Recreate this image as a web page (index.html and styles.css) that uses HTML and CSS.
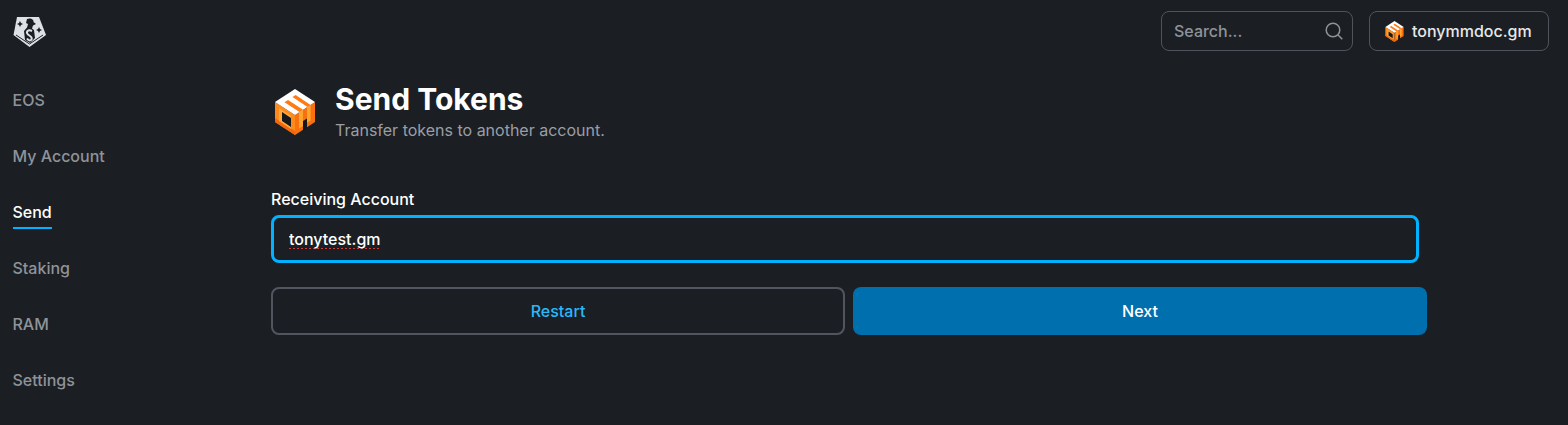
FILE: index.html
```html
<!DOCTYPE html>
<html lang="en">
    <head>
        <meta charset="utf-8">
        <meta name="viewport" content="width=device-width, initial-scale=1">
        <title>Send Tokens</title>

        <link rel="stylesheet" href="styles.css">
    </head>
    <body>
        <svg class="defs" width="0" height="0">
            <symbol id="cube" viewBox="0 0 40 46">
                <!-- left face -->
                <path fill="#ff8a1c" d="M0 13 20 26V46L0 33Z"/>
                <path fill="#f2660f" d="M0 29 20 42V46L0 33Z"/>
                <path fill="#ffa93a" d="M4 19 16 27V40L4 32Z"/>
                <path fill="#15181c" d="M7 23 16 29V38L7 32Z"/>
                <!-- right face -->
                <path fill="#f9710f" d="M20 26 40 13V33L20 46Z"/>
                <path fill="#ffa52e" d="M24 23.4 28 20.8V37L24 39.6Z"/>
                <path fill="#ffa52e" d="M32 18.2 35.6 15.9V31.5L32 33.8Z"/>
                <path fill="#15181c" d="M28 32 32 29.5V39.5L28 42Z"/>
                <!-- top face -->
                <path fill="#fff" d="M20 0 40 13 20 26 0 13Z"/>
                <path fill="#ff7a12" d="M20.6 6.1 17.5 8.1 32.5 17.9 35.6 15.9Z"/>
                <path fill="#ff7a12" d="M13 11.05 9.500 13.300 24.500 23.100 28 20.8Z"/>
            </symbol>
        </svg>

        <div class="layout">
            <div class="sidebar">
                <svg class="logo" viewBox="0 0 34 32">
                    <path fill="#dfe2e4" d="M4 1H26L33 19 16.500 31 0.500 19Z"/>
                    <path fill="none" stroke="#1b1f24" d="M3 19 16.500 28 30 19"/>
                    <path fill="#1b1f24" d="M14 3C17 1.500 21 3 20.500 6L23 8 20 9.500 19 12.500 21 14 22 22 17 27 12 24 11 15 14 11.500 15 8 13 7Z"/>
                    <path fill="none" stroke="#dfe2e4" stroke-width="2" d="M19 15C15 13 12.500 16 15 18.500 18 20.500 20 22 18 24 16.500 25 15 24 14 22.500"/>
                    <path fill="#1b1f24" d="M7 5 8 7 10 8 8 9 7 11 6 9 4 8 6 7Z"/>
                    <path fill="#1b1f24" d="M26 11 27 13 29 14 27 15 26 17 25 15 23 14 25 13Z"/>
                </svg>
                <nav class="nav">
                    <a href="#">EOS</a>
                    <a href="#">My Account</a>
                    <a href="#" class="active">Send</a>
                    <a href="#">Staking</a>
                    <a href="#">RAM</a>
                    <a href="#">Settings</a>
                </nav>
            </div>

            <div class="content">
                <div class="topbar">
                    <div class="search">
                        <span>Search...</span>
                        <svg class="search-icon" viewBox="0 0 18 18">
                            <circle cx="8" cy="8" r="6.800"/>
                            <path d="M13 13 17.300 17.300"/>
                        </svg>
                    </div>
                    <div class="account">
                        <svg class="account-icon"><use href="#cube"/></svg>
                        tonymmdoc.gm
                    </div>
                </div>

                <div class="page">
                    <div class="page-head">
                        <svg class="page-icon"><use href="#cube"/></svg>
                        <div>
                            <h1>Send Tokens</h1>
                            <p>Transfer tokens to another account.</p>
                        </div>
                    </div>

                    <label class="field-label" for="account">Receiving Account</label>
                    <input class="field" id="account" type="text" value="tonytest.gm" spellcheck="false">

                    <div class="actions">
                        <button class="btn btn-outline">Restart</button>
                        <button class="btn btn-primary">Next</button>
                    </div>
                </div>
            </div>
        </div>
    </body>
</html>
```

FILE: styles.css
```css
body {
    font-family: Inter, "Liberation Sans", sans-serif;
    margin: 0px;
    background-color: #1b1f24;
    color: #fff;
    overflow: hidden;
}

.defs {
    display: block;
}

.layout {
    display: flex;
    height: 425px;
}

.sidebar {
    width: 271px;
    flex: none;
    padding: 16px 0 0 12.5px;
    box-sizing: border-box;
}

.logo {
    display: block;
    width: 34px;
    height: 32px;
}

.nav {
    display: flex;
    flex-direction: column;
    align-items: flex-start;
    gap: 32px;
    margin-top: 40px;
}

.nav a {
    height: 24px;
    line-height: 24px;
    font-size: 16px;
    font-weight: 500;
    color: #8f9399;
    text-decoration: none;
    position: relative;
}

.nav a.active {
    color: #fff;
}

.nav a.active::after {
    content: "";
    position: absolute;
    left: 0;
    right: 0;
    bottom: -5px;
    height: 2px;
    background-color: #00b2ff;
}

.content {
    flex: 1;
}

.topbar {
    display: flex;
    justify-content: flex-end;
    gap: 16px;
    padding: 11px 19px 0 0;
}

.search,
.account {
    height: 40px;
    box-sizing: border-box;
    border: 1px solid #4f545c;
    border-radius: 8px;
    display: flex;
    align-items: center;
    font-size: 16px;
}

.search {
    width: 192px;
    padding: 0 9px 0 12px;
    justify-content: space-between;
    color: #8f9399;
    font-weight: 500;
}

.search-icon {
    width: 18px;
    height: 18px;
    fill: none;
    stroke: #8f9399;
    stroke-width: 1.5;
}

.account {
    width: 180px;
    padding-left: 15px;
    gap: 8px;
    font-weight: 500;
    color: #e6e8ea;
}

.account-icon {
    width: 19px;
    height: 21px;
}

.page {
    width: 1156px;
    margin-top: 30px;
}

.page-head {
    display: flex;
    align-items: center;
    gap: 20px;
    padding-left: 4px;
}

.page-icon {
    width: 40px;
    height: 46px;
}

h1 {
    margin: 0;
    font-size: 30px;
    line-height: 36px;
    font-weight: 700;
}

.page-head p {
    margin: 1px 0 0;
    font-size: 16px;
    line-height: 24px;
    color: #9a9ea4;
}

.field-label {
    display: block;
    margin-top: 45px;
    font-size: 16px;
    line-height: 24px;
    font-weight: 500;
}

.field {
    display: block;
    width: 1148px;
    height: 48px;
    margin-top: 4px;
    box-sizing: border-box;
    padding: 0 15px;
    background: transparent;
    border: 3px solid #00b2ff;
    border-radius: 8px;
    outline: none;
    color: #fff;
    font-family: inherit;
    font-size: 16px;
    font-weight: 500;
    text-decoration: underline dotted #d63a3a 2px;
    text-underline-offset: 3px;
}

.actions {
    display: grid;
    grid-template-columns: 1fr 1fr;
    gap: 8px;
    margin-top: 24px;
}

.btn {
    height: 48px;
    padding: 0;
    box-sizing: border-box;
    border-radius: 8px;
    font-family: inherit;
    font-size: 16px;
    font-weight: 500;
}

.btn-outline {
    background: transparent;
    border: 2px solid #51565e;
    color: #29b9fb;
}

.btn-primary {
    background-color: #006fad;
    border: none;
    color: #fff;
}
```
